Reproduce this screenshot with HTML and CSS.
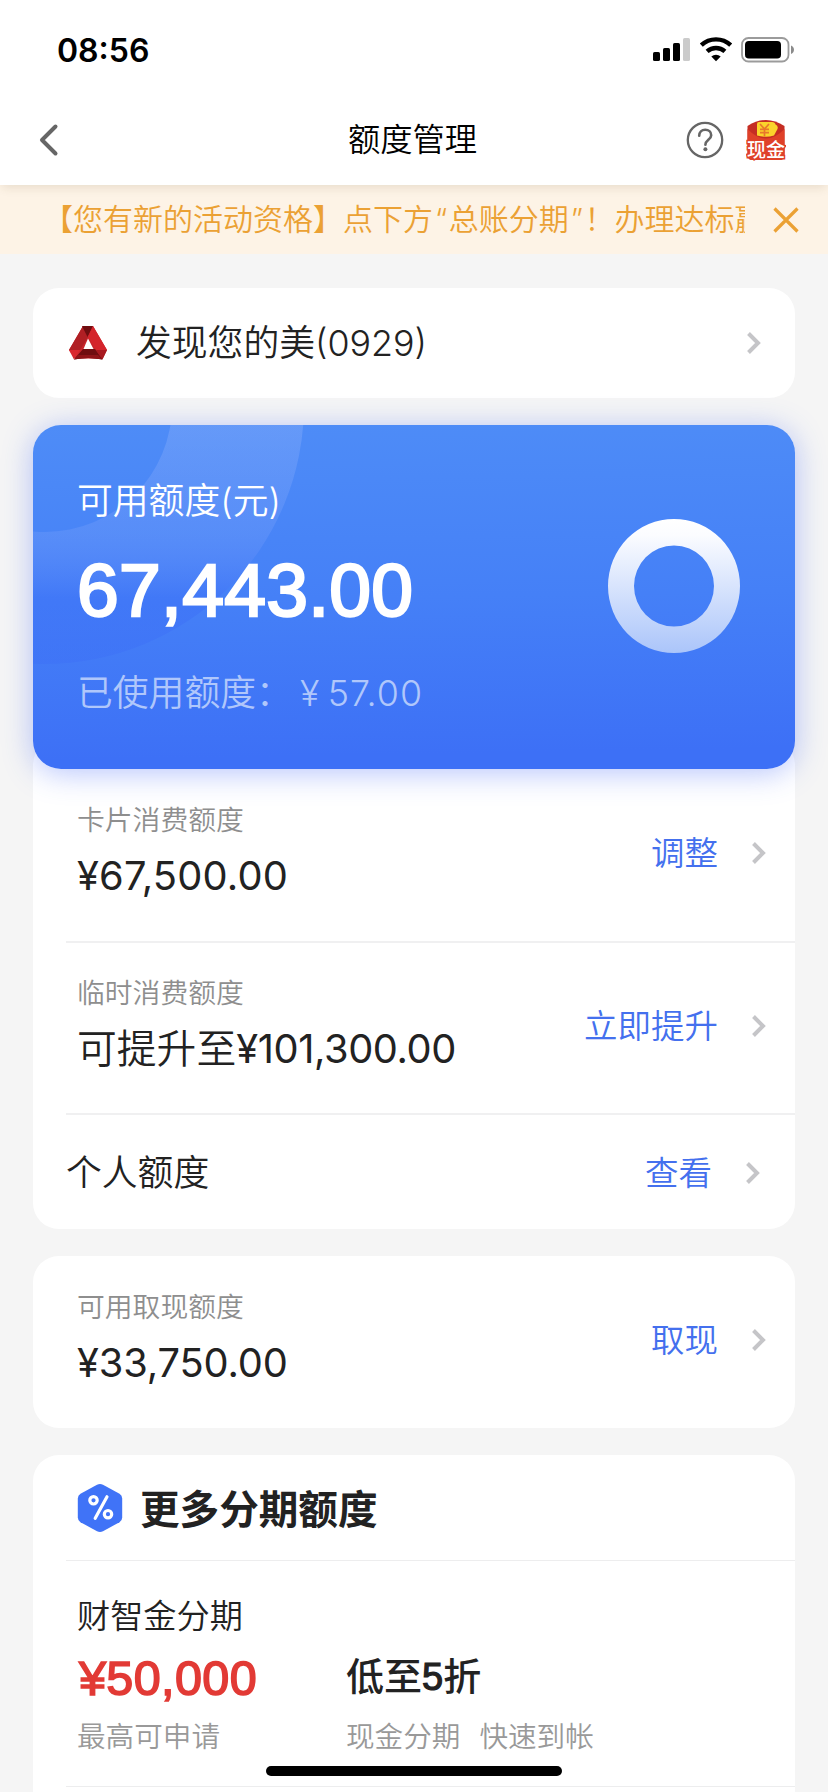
FILE: index.html
```html
<!DOCTYPE html>
<html lang="zh-CN">
<head>
<meta charset="utf-8">
<title>额度管理</title>
<link rel="stylesheet" href="styles.css">
</head>
<body>
<div class="screen">
  <header class="top">
    <div class="status">
      <span class="time">08:56</span>
      <svg class="status-icons" width="144" height="26" viewBox="0 0 144 26">
        <rect x="1" y="15" width="7" height="9" rx="1.6"/>
        <rect x="11" y="11" width="7" height="13" rx="1.6"/>
        <rect x="21" y="6" width="7" height="18" rx="1.6"/>
        <rect x="31" y="1" width="7" height="23" rx="1.6" fill="#cbcbcb"/>
        <g fill="none" stroke="#000" stroke-width="4.4">
          <path d="M49.3 8.2a21.5 21.5 0 0 1 29.4 0"/>
          <path d="M55.1 14.4a13.3 13.3 0 0 1 17.8 0"/>
        </g>
        <path d="M59.3 19.6a7 7 0 0 1 9.4 0L64 24.3z"/>
        <rect x="90" y="1" width="46.500" height="23.500" rx="6.500" fill="none" stroke="#9b9b9b" stroke-width="1.800"/>
        <rect x="93" y="4" width="36" height="17.500" rx="3.800"/>
        <path d="M139 8.500c4 1.500 4 7 0 8.500z" fill="#8b8b8b"/>
      </svg>
    </div>
    <nav class="nav">
      <svg class="back" width="20" height="34" viewBox="0 0 20 34"><path d="M16.500 3.500L3 17l13.500 13.500" fill="none" stroke="#666" stroke-width="4" stroke-linecap="round" stroke-linejoin="round"/></svg>
      <h1 class="title">额度管理</h1>
      <div class="nav-actions">
        <svg width="38" height="38" viewBox="0 0 38 38" fill="none" stroke="#666">
          <circle cx="19" cy="19" r="17.200" stroke-width="2.300"/>
          <path d="M13.200 14.800c0-3.700 2.600-6 6-6s6 2.200 6 5.400c0 4.600-5.800 4.700-5.800 9.600" stroke-width="2.600" stroke-linecap="round"/>
          <circle cx="19.400" cy="28.300" r="2" fill="#666" stroke="none"/>
        </svg>
        <svg class="packet" width="40" height="42" viewBox="0 0 40 42">
          <path d="M1.500 7Q20-5 38.500 7V36q0 5-5 5h-27q-5 0-5-5z" fill="#c52d23"/>
          <path d="M1.500 10q18.500 19 37 0V36q0 5-5 5h-27q-5 0-5-5z" fill="#df4129"/>
          <path d="M11 5q0-2 2-2h13q3 0 3.500 2.500 3 1.500 2 4.500l-3.500 6.500q-8 2.500-17 0z" fill="#fbd32b"/>
          <path d="M14 5l4.500 5L23 5M14 10.300h9M14 13.600h9M18.500 10v7.500" stroke="#e8772b" stroke-width="1.700" fill="none"/>
          <text class="packet-text" x="20" y="37.500" text-anchor="middle">现金</text>
        </svg>
      </div>
    </nav>
  </header>

  <section class="notice">
    <p class="notice-text">【您有新的活动资格】点下方<span class="quote">“</span>总账分期<span class="quote">”</span>！办理达标赢</p>
    <svg class="notice-close" width="26" height="26" viewBox="0 0 26 26"><path d="M1.500 1.500l23 23M24.500 1.500l-23 23" stroke="#eba134" stroke-width="3.200"/></svg>
  </section>

  <main class="content">
    <section class="panel card-select">
      <svg width="40" height="36" viewBox="0 0 40 36">
        <path d="M15 1h10L39 25l-4.500 9L24 33.500H7L1 25z" fill="#c9252b"/>
        <path d="M15 1L1 25h11l8-13z" fill="#b01f24"/>
        <path d="M1 25h11l-6 9.500z" fill="#d9282f"/>
        <path d="M14 1h11l-5.500 11z" fill="#6f0d10"/>
        <path d="M20 12l5-11 14 24H28z" fill="#d4242b"/>
        <path d="M28 25h11l-4.500 9.500z" fill="#a81a20"/>
        <path d="M15 24h12l7.500 10.500q-14-3-28.500 0z" fill="#6f0d10"/>
        <path d="M6 34.500q14-3 28.500 0L30 30H10z" fill="#8f1418"/>
        <path d="M20 13.500L15.500 24h10z" fill="#fff"/>
      </svg>
      <span class="card-name">发现您的美(0929)</span>
      <svg class="chevron" width="16" height="24" viewBox="0 0 16 24"><path d="M2.500 2.500L12 12l-9.500 9.500"/></svg>
    </section>

    <section class="quota">
      <div class="hero">
        <svg class="hero-arc" width="290" height="344" viewBox="0 0 290 344">
          <defs><linearGradient id="arc" x1="0" y1="0" x2="0" y2="240" gradientUnits="userSpaceOnUse">
            <stop offset="0" stop-color="#8fb2fb" stop-opacity=".36"/>
            <stop offset=".45" stop-color="#7ba2fb" stop-opacity=".3"/>
            <stop offset=".72" stop-color="#3d70f7" stop-opacity=".5"/>
            <stop offset="1" stop-color="#3c6ef6" stop-opacity=".4"/>
          </linearGradient></defs>
          <path fill="url(#arc)" fill-rule="evenodd" d="M-247-20a259 259 0 1 0 518 0a259 259 0 1 0-518 0zM-115-20a127 127 0 1 0 254 0a127 127 0 1 0-254 0z"/>
        </svg>
        <div class="hero-info">
          <div class="hero-label">可用额度(元)</div>
          <div class="hero-amount">67,443.00</div>
          <div class="hero-used">已使用额度：<span class="yuan">¥</span><span class="used-num">57.00</span></div>
        </div>
        <svg class="donut" width="134" height="136" viewBox="0 0 134 136">
          <defs><linearGradient id="ring" x1="0" y1="0" x2="0" y2="1">
            <stop offset="0" stop-color="#fff"/><stop offset=".12" stop-color="#fbfcff"/><stop offset="1" stop-color="#abc5fa"/>
          </linearGradient></defs>
          <path fill="url(#ring)" fill-rule="evenodd" d="M1 68a66 67 0 1 0 132 0a66 67 0 1 0-132 0zM27 68a40 40.500 0 1 0 80 0a40 40.500 0 1 0-80 0z"/>
        </svg>
      </div>
      <div class="panel quota-list">
        <div class="row">
          <div class="row-info"><div class="label">卡片消费额度</div><div class="value">¥67,500.00</div></div>
          <a class="action">调整</a>
          <svg class="chevron" width="16" height="24" viewBox="0 0 16 24"><path d="M2.500 2.500L12 12l-9.500 9.500"/></svg>
        </div>
        <div class="row ruled">
          <div class="row-info"><div class="label">临时消费额度</div><div class="value"><span class="han">可提升至</span>¥101,300.00</div></div>
          <a class="action">立即提升</a>
          <svg class="chevron" width="16" height="24" viewBox="0 0 16 24"><path d="M2.500 2.500L12 12l-9.500 9.500"/></svg>
        </div>
        <div class="row ruled short">
          <div class="row-info personal">个人额度</div>
          <a class="action">查看</a>
          <svg class="chevron" width="16" height="24" viewBox="0 0 16 24"><path d="M2.500 2.500L12 12l-9.500 9.500"/></svg>
        </div>
      </div>
    </section>

    <section class="panel cash">
      <div class="row">
        <div class="row-info"><div class="label">可用取现额度</div><div class="value">¥33,750.00</div></div>
        <a class="action">取现</a>
        <svg class="chevron" width="16" height="24" viewBox="0 0 16 24"><path d="M2.500 2.500L12 12l-9.500 9.500"/></svg>
      </div>
    </section>

    <section class="panel more">
      <div class="more-head">
        <svg width="46" height="50" viewBox="0 0 46 50">
          <path d="M20 1.800q3-1.600 6 0l16.500 9q2.700 1.500 2.700 4.600v19.200q0 3.100-2.700 4.600l-16.500 9q-3 1.600-6 0l-16.500-9Q.8 37.700.8 34.600V15.400q0-3.100 2.700-4.600z" fill="#4073f7"/>
          <g fill="none" stroke="#fff" stroke-width="3.200" stroke-linecap="round"><circle cx="16.500" cy="17.300" r="3.700"/><circle cx="31" cy="31.200" r="3.700"/><path d="M30 13.800L18.200 35.300"/></g>
        </svg>
        <h2 class="more-title">更多分期额度</h2>
      </div>
      <div class="offer">
        <div class="offer-name">财智金分期</div>
        <div class="offer-grid">
          <div class="offer-amount">¥50,000</div>
          <div class="offer-rate">低至<span class="five">5</span>折</div>
          <div class="hint">最高可申请</div>
          <div class="hint tags"><span>现金分期</span><span>快速到帐</span></div>
        </div>
      </div>
    </section>
  </main>
  <div class="home-bar"></div>
</div>
</body>
</html>
```
FILE: styles.css
```css
* { box-sizing: border-box; }
body {
  margin: 0;
  background: #f5f5f5;
  color: #222;
  font-family: Inter, "Noto Sans CJK SC", sans-serif;
  font-weight: 350;
}
h1, h2, p { margin: 0; font-weight: inherit; }
svg { display: block; flex: none; }
.screen {
  position: relative;
  width: 828px;
  height: 1792px;
  overflow: hidden;
  background: #f5f5f5;
}
.top {
  position: relative;
  z-index: 1;
  height: 185px;
  background: #fff;
  box-shadow: 0 4px 10px -2px rgba(90, 70, 30, .14);
}
.status {
  display: flex;
  justify-content: space-between;
  height: 95px;
  padding: 29px 32px 0 57px;
}
.time { margin-top: 1px; font-size: 32px; line-height: 41px; font-weight: 600; color: #000; }
.status-icons { margin-top: 8px; }
.nav {
  display: grid;
  grid-template-columns: 1fr auto 1fr;
  align-items: center;
  height: 90px;
  padding: 0 42px 0 39px;
}
.title { font-size: 32.300px; line-height: 48px; color: #000; }
.nav-actions { display: flex; align-items: center; justify-content: flex-end; gap: 22px; }
.packet-text {
  font-size: 19px;
  font-weight: 500;
  fill: #fff;
  stroke: #df4129;
  stroke-width: 3px;
  paint-order: stroke;
}
.notice {
  display: flex;
  align-items: center;
  justify-content: space-between;
  height: 69px;
  padding: 0 29px 0 43px;
  background: #fdf3e6;
  color: #eba134;
}
.notice-text {
  width: 702px;
  overflow: hidden;
  white-space: nowrap;
  font-size: 30px;
  line-height: 44px;
  padding-bottom: 2px;
}
.quote { margin: 0 1.500px 0 2px; }
.content { padding: 34px 33px 0; }
.panel { background: #fff; border-radius: 26px; }
.card-select {
  display: flex;
  align-items: center;
  height: 110px;
  padding: 0 33px 0 35px;
}
.card-name { flex: 1; margin-left: 28px; font-size: 35.800px; line-height: 50px; }
.chevron { fill: none; stroke: #c5c5c8; stroke-width: 4px; }
.quota { position: relative; margin-top: 27px; }
.quota::before {
  content: "";
  position: absolute;
  z-index: 1;
  inset: 0 0 auto;
  height: 344px;
  border-radius: 28px;
  box-shadow: 0 4px 30px rgba(62, 100, 246, .38);
}
.hero {
  position: relative;
  z-index: 2;
  display: flex;
  align-items: center;
  justify-content: space-between;
  height: 344px;
  padding: 0 54px 0 44px;
  border-radius: 28px;
  overflow: hidden;
  background: linear-gradient(179deg, #4e8cf7, #4580f7 50%, #3d70f6 94%);
  color: #fff;
}
.hero-arc { position: absolute; left: 0; top: 0; }
.hero-info { position: relative; height: 344px; padding-top: 51px; }
.hero-label { font-size: 35.800px; line-height: 50px; }
.hero-amount {
  margin-top: 21px;
  font-family: "Liberation Sans", sans-serif;
  font-size: 75px;
  font-weight: 400;
  line-height: 86px;
  letter-spacing: .300px;
  -webkit-text-stroke: 2.500px #fff;
}
.hero-used { margin-top: 35px; font-size: 35.800px; line-height: 50px; color: #b0c7fb; }
.yuan { display: inline-block; width: 36px; text-align: center; }
.used-num { letter-spacing: 1px; }
.donut { margin-top: -22px; }
.quota-list { margin-top: -30px; padding-top: 30px; }
.row { display: flex; align-items: center; height: 172px; padding: 0 28px 0 44px; }
.row-info { flex: 1; height: 172px; padding-top: 32px; }
.label { font-size: 27.800px; line-height: 38px; color: #8e8e8e; }
.value { margin-top: 12px; font-size: 39.800px; line-height: 50px; font-weight: 400; letter-spacing: .200px; }
.ruled .value { letter-spacing: -.400px; }
.cash .value { letter-spacing: -.150px; }
.han { font-weight: 350; letter-spacing: 0; }
.action { margin: 0 33px 4px 0; font-size: 33.500px; line-height: 48px; color: #4470ee; }
.row > .chevron { margin-bottom: 4px; }
.ruled { margin-left: 33px; padding-left: 11px; border-top: 2px solid #f0f0f1; }
.short { height: 116px; padding: 1px 34px 0 0; }
.short > .action, .short > .chevron { margin-bottom: 0; }
.personal { height: auto; padding: 0; font-size: 35.800px; line-height: 50px; }
.cash { margin-top: 27px; }
.more { margin-top: 27px; height: 400px; padding-left: 33px; }
.more-head {
  display: flex;
  align-items: center;
  gap: 17px;
  height: 106px;
  padding: 0 11px;
  border-bottom: 1px solid #ededee;
}
.more-title { padding-top: 4px; font-size: 39.600px; line-height: 54px; font-weight: 700; }
.offer { height: 226px; padding: 32px 11px 0; border-bottom: 1px solid #ededee; }
.offer-name { font-size: 33.200px; line-height: 46px; margin-bottom: 2px; }
.offer-grid { display: grid; grid-template-columns: 269px auto; align-items: center; }
.offer-amount {
  padding-left: 2px;
  font-family: "Liberation Sans", sans-serif;
  font-size: 48.500px;
  line-height: 73px;
  font-weight: 400;
  letter-spacing: .400px;
  color: #e23a35;
  -webkit-text-stroke: 1.600px #e23a35;
}
.offer-rate { font-size: 38px; line-height: 71px; padding-bottom: 2px; font-weight: 500; }
.five { font-family: "Liberation Sans", sans-serif; font-weight: 400; -webkit-text-stroke: 1.200px #222; }
.hint { font-size: 28.600px; line-height: 44px; color: #999; }
.tags { display: flex; gap: 19px; }
.home-bar {
  position: absolute;
  left: 266px;
  bottom: 16px;
  width: 296px;
  height: 10px;
  border-radius: 5px;
  background: #000;
}
```
